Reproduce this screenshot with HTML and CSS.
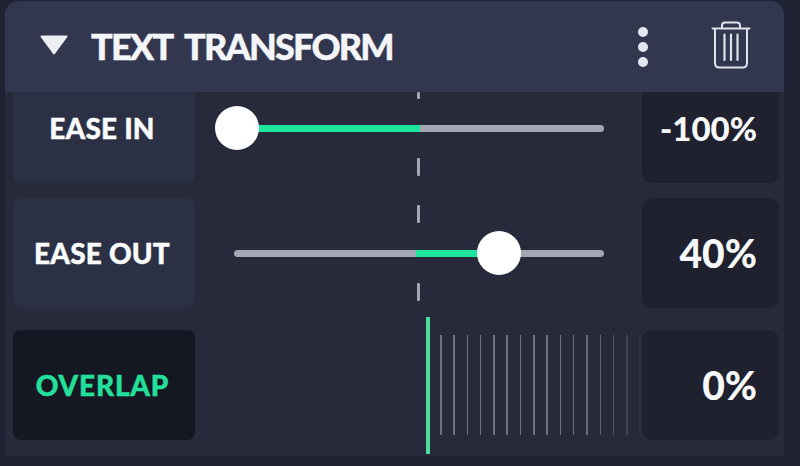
FILE: index.html
```html
<!DOCTYPE html>
<html lang="en">
<head>
<meta charset="utf-8">
<title>Text Transform</title>
<link rel="stylesheet" href="styles.css">
</head>
<body>
<section class="panel">
  <header class="head">
    <svg class="caret" viewBox="0 0 28 20" aria-hidden="true"><path d="M1.5 1.500H26.500L14 18.500Z" fill="#eceef3" stroke="#eceef3" stroke-width="2" stroke-linejoin="round"/></svg>
    <h1 class="title">TEXT TRANSFORM</h1>
    <div class="dots"><i></i><i></i><i></i></div>
    <svg class="trash" viewBox="0 0 40 50" fill="none" stroke="#dfe2ea" stroke-width="2" stroke-linecap="round" aria-hidden="true">
      <path d="M1.5 7.5H38.5"/>
      <path d="M11 7V4.5Q11 1.5 14 1.5H26Q29 1.5 29 4.5V7"/>
      <path d="M4 8V42Q4 46.5 8.5 46.5H31.5Q36 46.5 36 42V8"/>
      <path d="M13.5 13.5V39M20 13.5V39M26.500 13.5V39" stroke-width="2.200"/>
    </svg>
  </header>
  <div class="body">
    <div class="rows">
      <div class="row">
        <div class="label">EASE IN</div>
        <div class="slider">
          <div class="track">
            <div class="fill fill-in"></div>
            <div class="knob knob-in"></div>
          </div>
        </div>
        <div class="value value-long">-100%</div>
      </div>
      <div class="row">
        <div class="label">EASE OUT</div>
        <div class="slider">
          <div class="track">
            <div class="fill fill-out"></div>
            <div class="knob knob-out"></div>
          </div>
        </div>
        <div class="value">40%</div>
      </div>
      <div class="row row-overlap">
        <div class="label label-on">OVERLAP</div>
        <div class="stage">
          <div class="cursor"></div>
          <div class="ticks"><i></i><i></i><i></i><i></i><i></i><i></i><i></i><i></i><i></i><i></i><i></i><i></i><i></i><i></i><i></i><i></i><i></i><i></i></div>
        </div>
        <div class="value">0%</div>
      </div>
    </div>
    <div class="dash d1"></div>
    <div class="dash d2"></div>
    <div class="dash d3"></div>
    <div class="dash d4"></div>
  </div>
</section>
</body>
</html>
```
FILE: styles.css
```css
* { box-sizing: border-box; }
html, body { margin: 0; height: 100%; }
body {
  width: 800px;
  height: 466px;
  overflow: hidden;
  background: #1e2232;
  padding: 1px 16px 10px 5px;
  font-family: "Lato", "Liberation Sans", sans-serif;
}
.panel {
  height: 455px;
  display: flex;
  flex-direction: column;
  background: #262a3b;
  border-radius: 14px 14px 0 0;
  overflow: hidden;
}
.head {
  height: 91px;
  flex: none;
  display: flex;
  align-items: center;
  background: #32374f;
  position: relative;
  z-index: 2;
}
.caret { width: 28px; height: 20px; margin: -3px 0 0 35px; }
.title {
  margin: -1px 0 0 23px;
  font-size: 36px;
  font-weight: 900;
  letter-spacing: -1.8px;
  word-spacing: 7px;
  color: #f4f5f8;
  white-space: nowrap;
  -webkit-text-stroke: 0.4px #f4f5f8;
}
.dots {
  margin-left: auto;
  display: flex;
  flex-direction: column;
  gap: 5px;
}
.dots i { width: 10px; height: 10px; border-radius: 50%; background: #e4e7ef; }
.trash { width: 40px; height: 50px; margin: -2px 33px 0 63px; }
.body { position: relative; flex: 1; overflow: hidden; }
.rows {
  margin-top: -19px;
  padding: 0 5px 0 8px;
  display: flex;
  flex-direction: column;
  gap: 15px;
}
.row {
  display: grid;
  grid-template-columns: 182px minmax(0, 1fr) 137px;
  grid-template-rows: 110px;
  height: 110px;
}
.row-overlap { margin-top: 7px; }
.label {
  display: flex;
  align-items: center;
  justify-content: center;
  padding-right: 4px;
  background: #2c3045;
  border-radius: 8px;
  font-size: 28px;
  font-weight: 900;
  letter-spacing: 0.2px;
  color: #fafbfc;
  -webkit-text-stroke: 0.4px #fafbfc;
}
.label-on {
  padding-right: 3px;
  background: #151722;
  color: #22e09c;
  letter-spacing: 0.8px;
  -webkit-text-stroke: 0.4px #22e09c;
}
.value {
  display: flex;
  align-items: center;
  justify-content: flex-end;
  padding-right: 22px;
  background: #1f212f;
  border-radius: 10px;
  font-size: 39px;
  font-weight: 900;
  color: #f7f8fa;
}
.value-long { font-size: 33px; }
.slider { display: flex; align-items: center; padding: 0 38px 0 39px; }
.track {
  position: relative;
  width: 100%;
  height: 7px;
  border-radius: 3.5px;
  background: #a4a6b3;
}
.fill { position: absolute; top: 0; bottom: 0; background: #1de59e; }
.fill-in { left: 0.8%; width: 49.5%; }
.fill-out { left: 49.200%; width: 22.500%; }
.knob {
  position: absolute;
  top: 50%;
  width: 44px;
  height: 44px;
  margin: -22px 0 0 -22px;
  border-radius: 50%;
  background: #fff;
}
.knob-in { left: 0.8%; }
.knob-out { left: 71.600%; }
.stage { position: relative; display: flex; align-items: center; padding-left: 231px; }
.cursor {
  flex: none;
  width: 4px;
  height: 137px;
  margin-right: 10px;
  background: #4fdd9e;
}
.ticks {
  flex: none;
  display: flex;
  gap: 11.800px;
  height: 100px;
  position: relative;
  z-index: 1;
  -webkit-mask-image: linear-gradient(90deg, #000 0, #000 60%, rgba(0,0,0,.6) 78%, rgba(0,0,0,.08) 88%, transparent 100%);
  mask-image: linear-gradient(90deg, #000 0, #000 60%, rgba(0,0,0,.6) 78%, rgba(0,0,0,.08) 88%, transparent 100%);
}
.ticks i { flex: none; width: 1.5px; height: 100%; background: #6f7285; }
.dash {
  position: absolute;
  left: 412px;
  width: 3px;
  background: #a4a6b3;
  border-radius: 1px;
}
.d1 { top: 0; height: 7px; }
.d2 { top: 66px; height: 18px; }
.d3 { top: 113px; height: 18px; }
.d4 { top: 191px; height: 18px; }
```
